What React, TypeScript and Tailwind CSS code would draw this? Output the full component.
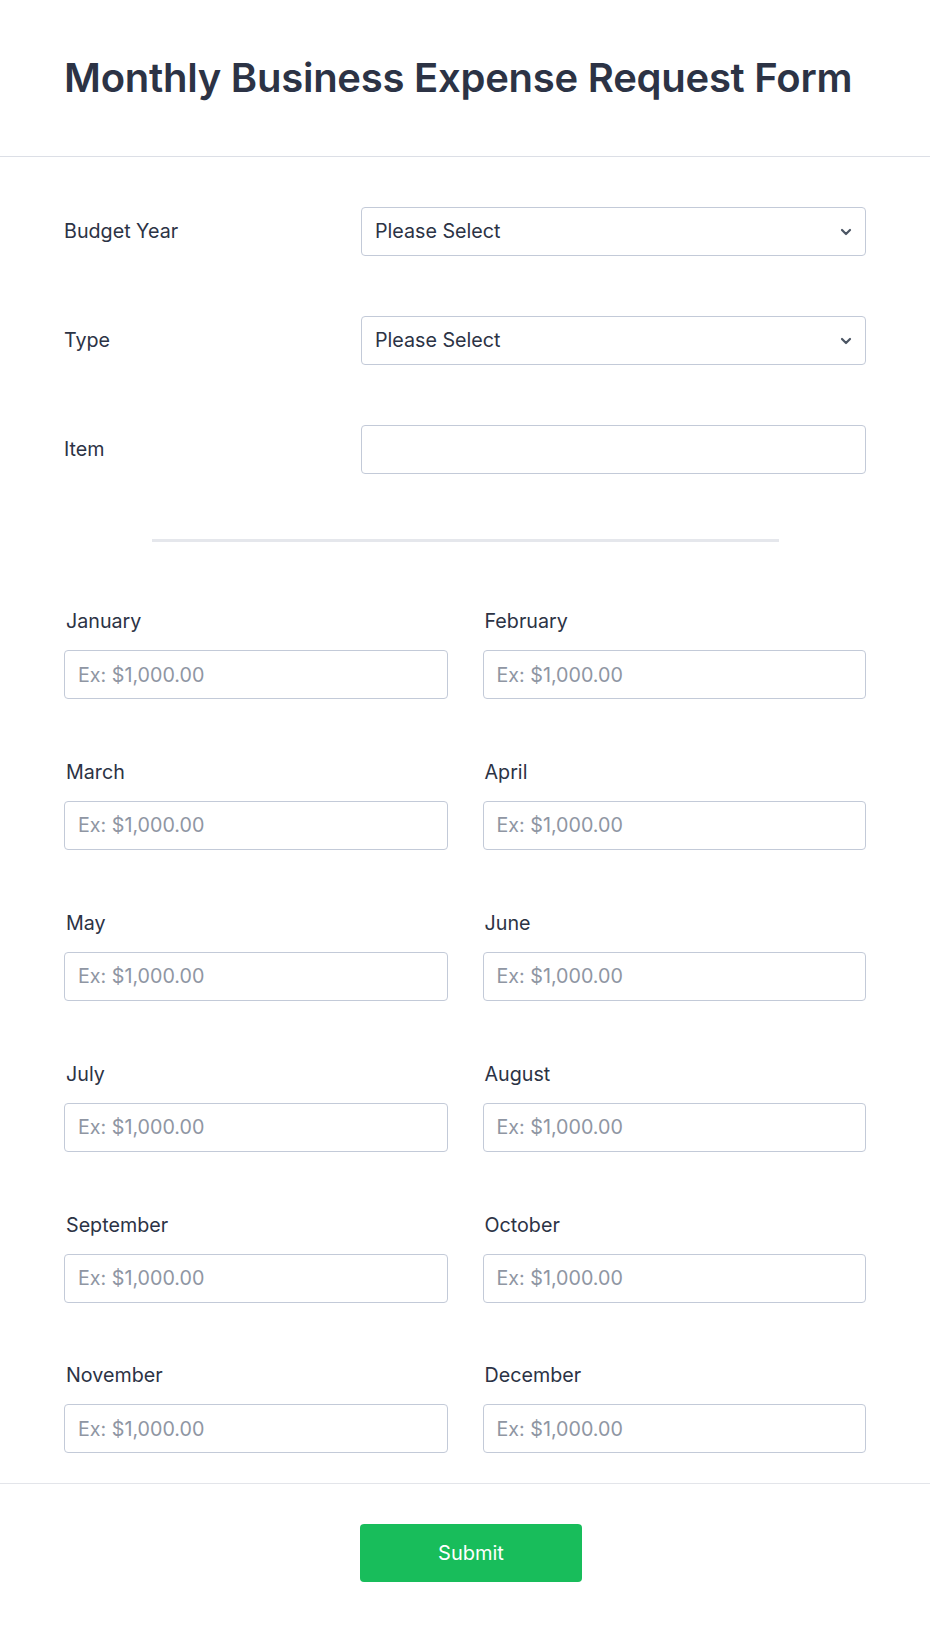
const months = [
  "January",
  "February",
  "March",
  "April",
  "May",
  "June",
  "July",
  "August",
  "September",
  "October",
  "November",
  "December",
];

function Chevron() {
  return (
    <svg
      width="12"
      height="8"
      viewBox="0 0 12 8"
      className="pointer-events-none absolute right-[14px] top-1/2 -translate-y-1/2"
    >
      <path d="M2 2l4 4 4-4" fill="none" stroke="#4b5563" strokeWidth="2.2" strokeLinecap="round" strokeLinejoin="round" />
    </svg>
  );
}

function SelectRow({ label }: { label: string }) {
  return (
    <div className="flex items-center">
      <label className="w-[297px] text-[19.7px] text-[#2c3345]">{label}</label>
      <div className="relative flex-1">
        <div className="flex h-[49px] items-center rounded-[4px] border border-[#c3cad8] bg-white px-[13px] text-[19.7px] text-[#2c3345]">
          Please Select
        </div>
        <Chevron />
      </div>
    </div>
  );
}

export default function App() {
  return (
    <div className="min-h-[1630px] bg-white font-['Inter',sans-serif] text-[#2c3345]">
      <header className="flex h-[157px] items-center border-b border-[#dcdfe6] px-[64px]">
        <h1 className="text-[40px] font-semibold leading-none tracking-[-0.25px] text-[#2c3345]">
          Monthly Business Expense Request Form
        </h1>
      </header>

      <div className="px-[64px] pt-[50px]">
        <div className="flex flex-col gap-[60px]">
          <SelectRow label="Budget Year" />
          <SelectRow label="Type" />
          <div className="flex items-center">
            <label className="w-[297px] text-[19.7px]">Item</label>
            <input className="h-[49px] flex-1 rounded-[4px] border border-[#c3cad8] bg-white px-[13px] text-[19.7px] outline-none" />
          </div>
        </div>

        <div className="mx-auto mt-[65px] h-[3px] w-[627px] bg-[#e5e7ec]" />

        <div className="mt-[67px] grid grid-cols-2 gap-x-[35px] gap-y-[60.9px]">
          {months.map((m) => (
            <div key={m} className="flex flex-col">
              <label className="pl-[2px] text-[19.7px] leading-[24px]">{m}</label>
              <input
                placeholder="Ex: $1,000.00"
                className="mt-[17px] h-[49px] rounded-[4px] border border-[#c3cad8] bg-white px-[13px] text-[19.7px] outline-none placeholder:text-[#8f96a3]"
              />
            </div>
          ))}
        </div>
      </div>

      <div className="mt-[30px] flex justify-center border-t border-[#e3e5ea] pt-[40px]">
        <button className="ml-[12px] h-[58px] w-[222px] rounded-[4px] bg-[#18bd5b] text-[20px] text-white">
          Submit
        </button>
      </div>
    </div>
  );
}
